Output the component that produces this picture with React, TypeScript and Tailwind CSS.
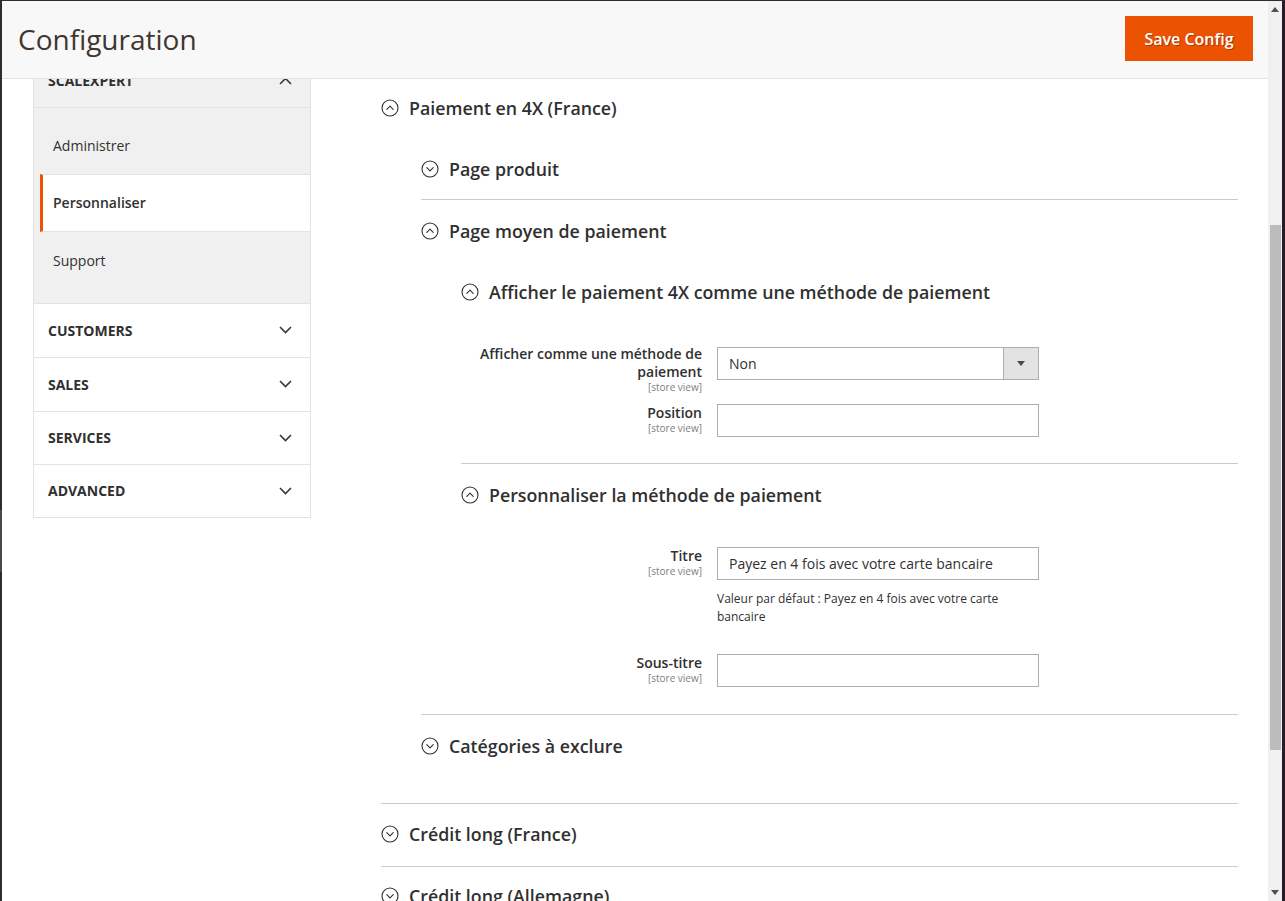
import React from 'react';

const SANS = "font-['Open_Sans',sans-serif]";
const NARROW = "font-['Open_Sans',sans-serif] [font-stretch:90%]";

function CircleChevron({ up }: { up?: boolean }) {
  return (
    <svg width="18" height="18" viewBox="0 0 18 18" fill="none" stroke="#303030" strokeWidth="1.1">
      <circle cx="9" cy="9" r="8" />
      <path
        d={up ? 'M5.8 10.4 9 7.2l3.2 3.2' : 'M5.8 7.6 9 10.8l3.2-3.2'}
        strokeLinecap="round"
        strokeLinejoin="round"
      />
    </svg>
  );
}

function SideChevron({ up }: { up?: boolean }) {
  return (
    <svg width="13" height="8" viewBox="0 0 13 8" fill="none" stroke="#41362f" strokeWidth="1.6">
      <path d={up ? 'M1 7 6.5 1.5 12 7' : 'M1 1l5.5 5.5L12 1'} />
    </svg>
  );
}

function Heading({ title, up, className = '' }: { title: string; up?: boolean; className?: string }) {
  return (
    <div className={`h-[40px] flex items-center gap-[10px] ${className}`}>
      <CircleChevron up={up} />
      <span className="text-[17.8px] font-semibold text-[#303030]">{title}</span>
    </div>
  );
}

function Label({ lines, className = '' }: { lines: string[]; className?: string }) {
  return (
    <div className={`w-[256px] shrink-0 pr-[15px] text-right ${className}`}>
      {lines.map((l) => (
        <div key={l} className="text-[14px] leading-[18px] font-semibold text-[#303030]">
          {l}
        </div>
      ))}
      <div className="text-[10px] leading-[12px] text-[#808080]">[store view]</div>
    </div>
  );
}

function TextInput({ value = '', className = '' }: { value?: string; className?: string }) {
  return (
    <div
      className={`w-[322px] h-[33px] border border-[#adadad] bg-white flex items-center pl-[11px] text-[14px] text-[#303030] ${className}`}
    >
      {value}
    </div>
  );
}

const SECTIONS = ['CUSTOMERS', 'SALES', 'SERVICES', 'ADVANCED'];

export default function App() {
  return (
    <div className={`w-[1285px] h-[901px] bg-[#302c2a] pt-px overflow-hidden ${SANS}`}>
      <div className="flex h-[900px]">
        {/* cadre gauche */}
        <div className="w-[2px] shrink-0 flex flex-col">
          <div className="h-[509px] bg-[#302c2a]" />
          <div className="h-[62px] bg-[#4b4846]" />
          <div className="flex-1 bg-[#302c2a]" />
        </div>

        <div className="w-[1266px] flex flex-col bg-white">
          {/* en-tête */}
          <header className="h-[78px] shrink-0 bg-[#f8f8f8] border-b border-[#e3e3e3] flex items-center justify-between pl-[16px] pr-[15px]">
            <h1 className="text-[28px] font-normal text-[#41362f] -mt-[2px]">Configuration</h1>
            <button className="w-[128px] h-[45px] bg-[#eb5202] text-white text-[16px] font-semibold [text-shadow:1px_1px_0_rgba(0,0,0,0.3)] -mt-[2px]">
              Save Config
            </button>
          </header>

          <div className="flex-1 overflow-hidden flex">
            {/* menu de gauche */}
            <aside className="ml-[31px] w-[278px] shrink-0 -mt-[25px]">
              <div className="border-x border-[#e3e3e3]">
                <div className="h-[54px] bg-[#f0f0f0] border-b border-[#e3e3e3] flex items-center justify-between pl-[14px] pr-[18px]">
                  <span className="text-[14px] font-bold text-[#303030]">SCALEXPERT</span>
                  <SideChevron up />
                </div>
                <div className="bg-[#f0f0f0] border-b border-[#e3e3e3] pt-[8px] pb-[13px]">
                  <div className="h-[58px] flex items-center pl-[19px] text-[14px] text-[#303030]">Administrer</div>
                  <div className="h-[58px] ml-[6px] bg-white border-l-[3px] border-l-[#eb5202] border-y border-y-[#e3e3e3] flex items-center pl-[10px] pb-px text-[14px] font-semibold text-[#303030]">
                    Personnaliser
                  </div>
                  <div className="h-[58px] flex items-center pl-[19px] pb-[2px] text-[14px] text-[#303030]">Support</div>
                </div>
                {SECTIONS.map((s, i) => (
                  <div
                    key={s}
                    className={`${i < 2 ? 'h-[54px]' : 'h-[53px]'} border-b border-[#e3e3e3] flex items-center justify-between pl-[14px] pr-[18px] pb-px`}
                  >
                    <span className="text-[14px] font-bold text-[#303030]">{s}</span>
                    <SideChevron />
                  </div>
                ))}
              </div>
            </aside>

            {/* contenu principal */}
            <main className="ml-[70px] w-[857px] shrink-0 pt-[9px]">
              <Heading title="Paiement en 4X (France)" up />
              <div className="pl-[40px]">
                <Heading title="Page produit" className="mt-[21px]" />
                <div className="mt-[10px] border-t border-[#cccccc]" />
                <Heading title="Page moyen de paiement" up className="mt-[11px]" />
                <div className="pl-[40px]">
                  <Heading title="Afficher le paiement 4X comme une méthode de paiement" up className="mt-[21px]" />

                  <div className={`mt-[33px] flex ${NARROW}`}>
                    <Label lines={['Afficher comme une méthode de', 'paiement']} />
                    <div className="mt-[2px] w-[322px] h-[33px] border border-[#adadad] bg-white flex">
                      <div className="flex-1 flex items-center pl-[11px] text-[14px] text-[#303030]">Non</div>
                      <div className="w-[35px] bg-[#e3e3e3] border-l border-[#adadad] flex items-center justify-center">
                        <svg width="8" height="5" viewBox="0 0 8 5">
                          <path d="M0 0h8L4 5z" fill="#514943" />
                        </svg>
                      </div>
                    </div>
                  </div>

                  <div className={`mt-[11px] flex ${NARROW}`}>
                    <Label lines={['Position']} />
                    <TextInput />
                  </div>

                  <div className="mt-[26px] border-t border-[#cccccc]" />
                  <Heading title="Personnaliser la méthode de paiement" up className="mt-[11px]" />

                  <div className={`mt-[32px] flex ${NARROW}`}>
                    <Label lines={['Titre']} />
                    <div>
                      <TextInput value="Payez en 4 fois avec votre carte bancaire" />
                      <p className="mt-[10px] w-[322px] text-[12px] leading-[18px] text-[#303030]">
                        Valeur par défaut : Payez en 4 fois avec votre carte bancaire
                      </p>
                    </div>
                  </div>

                  <div className={`mt-[28px] flex ${NARROW}`}>
                    <Label lines={['Sous-titre']} />
                    <TextInput />
                  </div>
                </div>

                <div className="mt-[27px] border-t border-[#cccccc]" />
                <Heading title="Catégories à exclure" className="mt-[11px]" />
              </div>

              <div className="mt-[37px] border-t border-[#cccccc]" />
              <Heading title="Crédit long (France)" className="mt-[10px]" />
              <div className="mt-[12px] border-t border-[#cccccc]" />
              <Heading title="Crédit long (Allemagne)" className="mt-[9px]" />
            </main>
          </div>
        </div>

        {/* barre de défilement */}
        <div className="w-[14px] shrink-0 bg-[#f0f0f0] flex flex-col items-center">
          <svg width="8" height="5" viewBox="0 0 8 5" className="mt-[6px]">
            <path d="M4 0l4 5H0z" fill="#505050" />
          </svg>
          <div className="mt-[213px] w-[11px] h-[525px] bg-[#bcbcbc]" />
          <svg width="8" height="5" viewBox="0 0 8 5" className="mt-auto mb-[6px]">
            <path d="M0 0h8L4 5z" fill="#505050" />
          </svg>
        </div>

        <div className="w-[3px] shrink-0 bg-[#2b1b28]" />
      </div>
    </div>
  );
}
